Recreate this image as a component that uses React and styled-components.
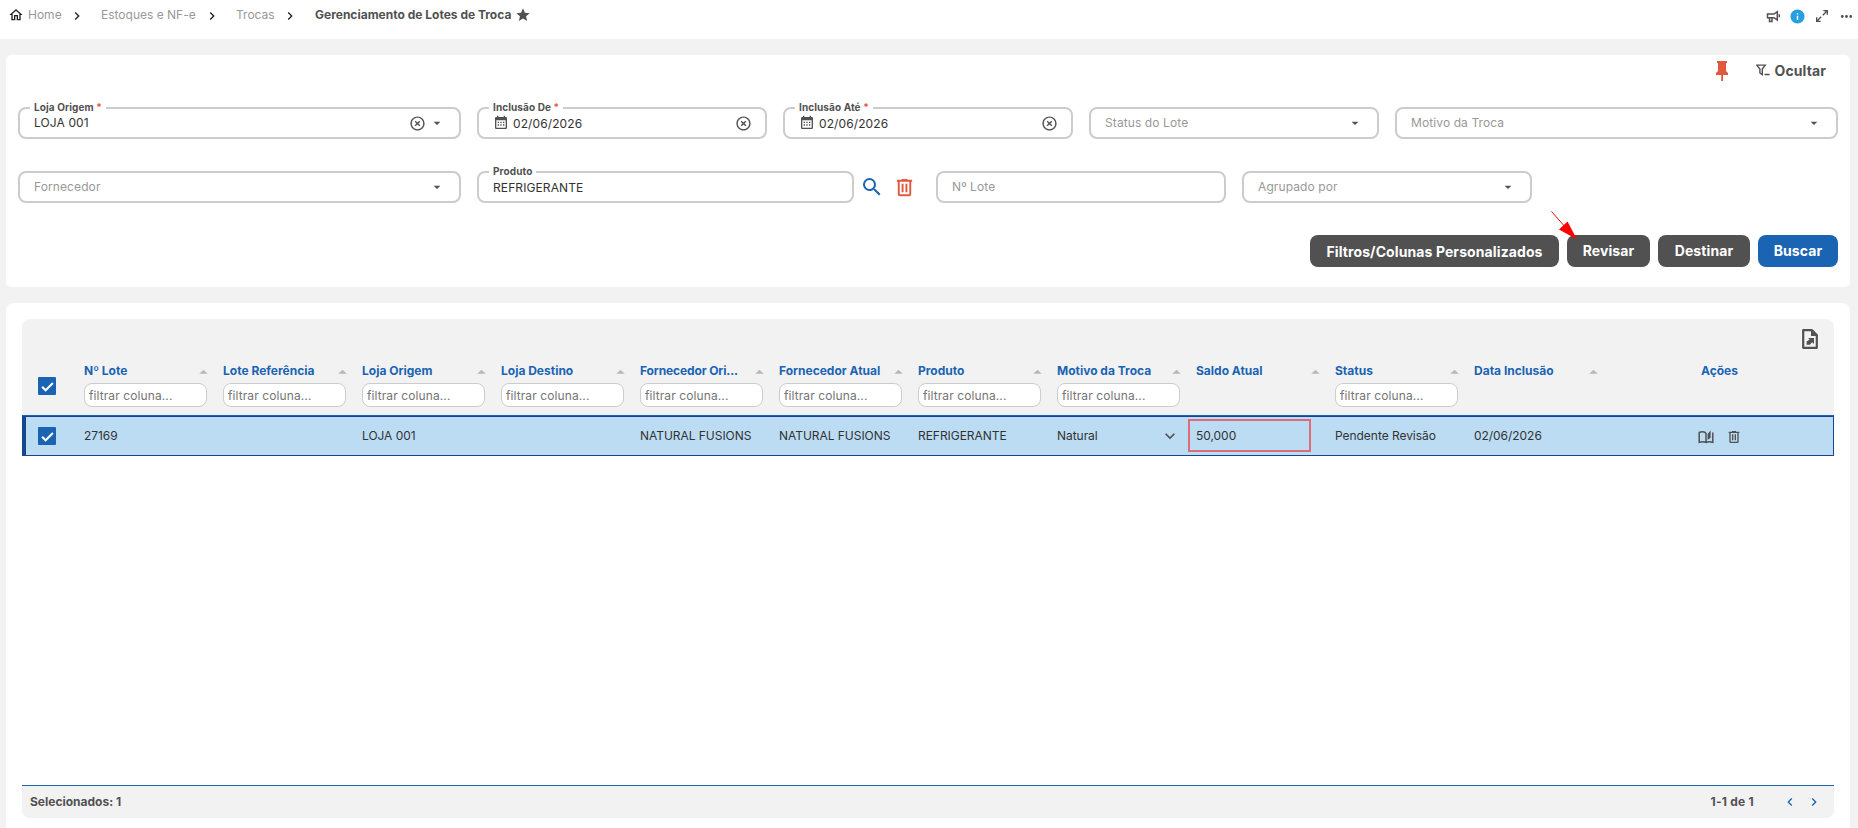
import React from "react";
import styled, { createGlobalStyle } from "styled-components";

const GlobalStyle = createGlobalStyle`
  *, *::before, *::after { box-sizing: border-box; }
  html, body { margin: 0; background: #f2f2f2; }
  body { font-family: Inter, "Liberation Sans", sans-serif; font-size: 12px; color: #333; overflow: hidden; }
`;

const GREY = "#515151";
const BLUE = "#1a64b3";
const RED = "#e2583e";

const ICONS = {
  home: "M12 5.69L17 10.19V18H15V12H9V18H7V10.19L12 5.69M12 3L2 12H5V20H11V14H13V20H19V12H22L12 3Z",
  right: "M8.59,16.58L13.17,12L8.59,7.41L10,6L16,12L10,18L8.59,16.58Z",
  left: "M15.41,16.58L10.83,12L15.41,7.41L14,6L8,12L14,18L15.41,16.58Z",
  down: "M7.41,8.58L12,13.17L16.59,8.58L18,10L12,16L6,10L7.41,8.58Z",
  caret: "M7,10L12,15L17,10H7Z",
  sort: "M6,15L12,9.5L18,15H6Z",
  star: "M12,17.27L18.18,21L16.54,13.97L22,9.24L14.81,8.62L12,2L9.19,8.62L2,9.24L7.45,13.97L5.82,21L12,17.27Z",
  calendar:
    "M9,10V12H7V10H9M13,10V12H11V10H13M17,10V12H15V10H17M19,3A2,2 0 0,1 21,5V19A2,2 0 0,1 19,21H5C3.89,21 3,20.1 3,19V5A2,2 0 0,1 5,3H6V1H8V3H16V1H18V3H19M19,19V8H5V19H19M9,14V16H7V14H9M13,14V16H11V14H13M17,14V16H15V14H17Z",
  clear:
    "M12,20C7.59,20 4,16.41 4,12C4,7.59 7.59,4 12,4C16.41,4 20,7.59 20,12C20,16.41 16.41,20 12,20M12,2C6.47,2 2,6.47 2,12C2,17.53 6.47,22 12,22C17.53,22 22,17.53 22,12C22,6.47 17.53,2 12,2M14.59,8L12,10.59L9.41,8L8,9.41L10.59,12L8,14.59L9.41,16L12,13.41L14.59,16L16,14.59L13.41,12L16,9.41L14.59,8Z",
  info: "M13,9H11V7H13M13,17H11V11H13M12,2A10,10 0 0,0 2,12A10,10 0 0,0 12,22A10,10 0 0,0 22,12A10,10 0 0,0 12,2Z",
  expand:
    "M14,3V5H17.59L12.5,10.09L13.91,11.5L19,6.41V10H21V3M10.09,12.5L5,17.59V14H3V21H10V19H6.41L11.5,13.91Z",
  dots: "M16,12A2,2 0 0,1 18,10A2,2 0 0,1 20,12A2,2 0 0,1 18,14A2,2 0 0,1 16,12M10,12A2,2 0 0,1 12,10A2,2 0 0,1 14,12A2,2 0 0,1 12,14A2,2 0 0,1 10,12M4,12A2,2 0 0,1 6,10A2,2 0 0,1 8,12A2,2 0 0,1 6,14A2,2 0 0,1 4,12Z",
  search:
    "M9.5,3A6.5,6.5 0 0,1 16,9.5C16,11.11 15.41,12.59 14.44,13.73L14.71,14H15.5L20.5,19L19,20.5L14,15.5V14.71L13.73,14.44C12.59,15.41 11.11,16 9.5,16A6.5,6.5 0 0,1 3,9.5A6.5,6.5 0 0,1 9.5,3M9.5,5C7,5 5,7 5,9.5C5,12 7,14 9.5,14C12,14 14,12 14,9.5C14,7 12,5 9.5,5Z",
  trash:
    "M9,3V4H4V6H5V19A2,2 0 0,0 7,21H17A2,2 0 0,0 19,19V6H20V4H15V3H9M7,6H17V19H7V6M9,8V17H11V8H9M13,8V17H15V8H13Z",
  check: "M9 20.4L2.2 13.6L4.6 11.2L9 15.6L19.4 5.2L21.8 7.6Z",
};

const Svg = styled.svg`
  display: block;
  flex: none;
  width: ${(p) => p.$size}px;
  height: ${(p) => p.$size}px;
  fill: ${(p) => p.$color || GREY};
`;

const Icon = ({ name, size = 16, color, className }) => (
  <Svg viewBox="0 0 24 24" $size={size} $color={color} className={className}>
    <path d={ICONS[name]} />
  </Svg>
);

const Page = styled.div`
  display: flex;
  flex-direction: column;
  height: 828px;
  background: #f2f2f2;
`;

const TopBar = styled.header`
  display: flex;
  justify-content: space-between;
  height: 39px;
  padding: 0 3px 9px 8px;
  background: #fff;
`;

const Breadcrumb = styled.nav`
  display: flex;
  align-items: center;
`;

const Crumb = styled.span`
  color: ${(p) => (p.$current ? GREY : "#999")};
  font-weight: ${(p) => (p.$current ? 700 : 400)};
  padding-bottom: 2px;
  white-space: nowrap;
  width: ${(p) => p.$w}px;
  margin-left: ${(p) => p.$gap || 0}px;
`;

const CrumbArrow = styled(Icon)`
  margin: 2px 0 0 7px;
`;

const TopActions = styled.div`
  display: flex;
  align-items: center;
  gap: 8px;
  padding-top: 2px;
`;

const Panel = styled.section`
  margin: 16px 8px 0 6px;
  background: #fff;
  border-radius: 5px;
`;

const FilterPanel = styled(Panel)`
  height: 232px;
  padding: 0 12px;
`;

const PanelTools = styled.div`
  display: flex;
  justify-content: flex-end;
  align-items: center;
  height: 32px;
  padding-right: 12px;
`;

const HideButton = styled.button`
  display: flex;
  align-items: center;
  gap: 5px;
  margin-left: 28px;
  padding: 0 0 2px;
  border: 0;
  background: none;
  color: ${GREY};
  font: 700 14px Inter, sans-serif;
  letter-spacing: 0.1px;
`;

const FieldRow = styled.div`
  display: flex;
  gap: 16px;
  margin-top: ${(p) => p.$top}px;
`;

const FieldBox = styled.div`
  position: relative;
  display: flex;
  align-items: center;
  flex: none;
  width: ${(p) => p.$w}px;
  height: 32px;
  padding: 0 14px;
  border: 2px solid #ccc;
  border-radius: 8px;
  color: ${(p) => (p.$empty ? "#999" : "#333")};
`;

const FieldLabel = styled.label`
  position: absolute;
  top: -9px;
  left: 10px;
  padding: 0 4px;
  background: #fff;
  color: ${GREY};
  font-size: 10px;
  line-height: 15px;
  font-weight: 700;
  letter-spacing: 0.1px;
  white-space: nowrap;
`;

const Required = styled.span`
  color: ${RED};
`;

const FieldText = styled.span`
  flex: 1;
  padding-bottom: ${(p) => (p.$low ? 0 : 2)}px;
  letter-spacing: 0.1px;
  white-space: nowrap;
`;

const FieldCalendar = styled(Icon)`
  margin: -1px 4px 0 0;
`;

const FieldClear = styled(Icon)`
  margin-right: -0.5px;
`;

const SelectCaret = styled(Icon)`
  margin-left: 4px;
`;

const Field = ({ w, label, required, value, placeholder, date, clear, select }) => (
  <FieldBox $w={w} $empty={!value}>
    {label && (
      <FieldLabel>
        {label} {required && <Required>*</Required>}
      </FieldLabel>
    )}
    {date && <FieldCalendar name="calendar" size={16} />}
    <FieldText $low={label && !select}>{value || placeholder}</FieldText>
    {clear && <FieldClear name="clear" size={17} />}
    {select && <SelectCaret name="caret" size={16} />}
  </FieldBox>
);

const ProductGroup = styled.div`
  display: flex;
  align-items: center;
  width: 443px;
`;

const ProductIcon = styled(Icon)`
  margin-left: ${(p) => (p.name === "search" ? 6 : 9)}px;
`;

const ButtonRow = styled.div`
  display: flex;
  justify-content: flex-end;
  gap: 8px;
  margin-top: 32px;
`;

const Button = styled.button`
  width: ${(p) => p.$w}px;
  height: 32px;
  padding: 0 0 ${(p) => (p.$low ? "0" : "2px")};
  border: 0;
  border-radius: 8px;
  background: ${(p) => (p.$primary ? BLUE : GREY)};
  color: #fff;
  font: 700 14px Inter, sans-serif;
  letter-spacing: 0.1px;
  white-space: nowrap;
`;

const Pointer = styled.svg`
  position: absolute;
  left: 1551px;
  top: 211px;
  width: 27px;
  height: 30px;
`;

const ListPanel = styled(Panel)`
  display: flex;
  flex: 1;
  flex-direction: column;
  padding: 16px 16px 10px;
  border-radius: 8px 8px 0 0;
`;

const TableHead = styled.div`
  height: 97px;
  border-radius: 8px 8px 0 0;
  border-bottom: 1px solid ${BLUE};
  background: #f2f2f2;
`;

const HeadTools = styled.div`
  display: flex;
  justify-content: flex-end;
  height: 42px;
  padding: 10px 16px 0 0;
`;

const GridRow = styled.div`
  display: grid;
  grid-template-columns: 62px repeat(11, 139px) 1fr;
`;

const SelectedRow = styled(GridRow)`
  align-items: center;
  height: 40px;
  border: 1px solid #15468e;
  border-left-width: 4px;
  background: #bbdcf3;
  grid-template-columns: 58px repeat(11, 139px) 1fr;
`;

const CheckCell = styled.div`
  padding: ${(p) => (p.$head ? "16px 0 0 16px" : "0 0 0 12px")};
`;

const Checkbox = styled.span`
  display: flex;
  align-items: center;
  justify-content: center;
  width: 18px;
  height: 18px;
  border-radius: 1px;
  background: ${BLUE};
`;

const HeadCell = styled.div`
  width: 124px;
`;

const HeadTitle = styled.div`
  display: flex;
  align-items: center;
  justify-content: space-between;
  height: 20px;
  color: ${BLUE};
  font-weight: 700;
  white-space: nowrap;
`;

const TitleText = styled.span`
  padding-bottom: 2px;
  letter-spacing: ${(p) => p.$track}px;
`;

const SortIcon = styled(Icon)`
  margin-right: -4px;
`;

const FilterInput = styled.input`
  display: block;
  width: 123px;
  height: 24px;
  margin-top: 2px;
  padding: 1px 4px 0;
  border: 1px solid #ccc;
  border-radius: 8px;
  background: #fff;
  font: 400 12px Inter, sans-serif;
  letter-spacing: 0.1px;
  &::placeholder { color: #757575; opacity: 1; }
`;

const ActionsTitle = styled.div`
  padding-left: 88px;
  color: ${BLUE};
  font-weight: 700;
  line-height: 19px;
`;

const Cell = styled.div`
  display: flex;
  align-items: center;
  justify-content: space-between;
  width: 123px;
  padding-bottom: 2px;
  letter-spacing: -0.04px;
  white-space: nowrap;
`;

const BalanceCell = styled(Cell)`
  height: 33px;
  margin: -1px 0 0 -8px;
  padding: 0 0 0 6px;
  border: 2px solid #de6c78;
`;

const RowChevron = styled(Icon)`
  margin: 0 0 -1px;
`;

const RowActions = styled.div`
  display: flex;
  align-items: center;
  gap: 12px;
  padding: 2px 0 0 84.5px;
`;

const EmptyArea = styled.div`
  flex: 1;
`;

const Footer = styled.footer`
  display: flex;
  align-items: center;
  height: 33px;
  padding: 0 12px 1px 8px;
  border-top: 1px solid ${BLUE};
  border-radius: 0 0 8px 8px;
  background: #f2f2f2;
  color: ${GREY};
  font-weight: 700;
`;

const Pager = styled.div`
  display: flex;
  align-items: center;
  gap: 8px;
  margin-left: auto;
`;

const PageRange = styled.span`
  margin-right: 20px;
  letter-spacing: 0.25px;
`;

const COLUMNS = [
  ["Nº Lote", true],
  ["Lote Referência", true],
  ["Loja Origem", true],
  ["Loja Destino", true],
  ["Fornecedor Ori...", true, -0.12],
  ["Fornecedor Atual", true],
  ["Produto", true],
  ["Motivo da Troca", true],
  ["Saldo Atual", false],
  ["Status", true],
  ["Data Inclusão", false],
];

const Check = () => (
  <Checkbox>
    <Icon name="check" size={15} color="#fff" />
  </Checkbox>
);

export default function App() {
  return (
    <Page>
      <GlobalStyle />
      <TopBar>
        <Breadcrumb>
          <Icon name="home" size={16} color="#222" />
          <Crumb $w={34} $gap={4}>Home</Crumb>
          <CrumbArrow name="right" size={16} color="#222" />
          <Crumb $w={96} $gap={16}>Estoques e NF-e</Crumb>
          <CrumbArrow name="right" size={16} color="#222" />
          <Crumb $w={39} $gap={16}>Trocas</Crumb>
          <CrumbArrow name="right" size={16} color="#222" />
          <Crumb $current $w={200} $gap={17}>Gerenciamento de Lotes de Troca</Crumb>
          <Icon name="star" size={16} />
        </Breadcrumb>
        <TopActions>
          <svg width="16" height="16" viewBox="0 0 16 16" fill="none" stroke={GREY} strokeWidth="1.5">
            <path d="M2.5 6H9L12.300 3.700V12L9 9.700H2.500ZM4.500 9.700V13.500H7V9.700M14.300 6.300V9.200" />
          </svg>
          <Icon name="info" size={17} color="#259fe0" />
          <Icon name="expand" size={16} />
          <Icon name="dots" size={17} />
        </TopActions>
      </TopBar>

      <FilterPanel>
        <PanelTools>
          <svg width="12" height="20" viewBox="0 0 12 20" fill={RED}>
            <path d="M1 0H11V2H10V10L12 12V14H7V20H5.2V14H0V12L2 10V2H1Z" />
          </svg>
          <HideButton>
            <svg width="14" height="12" viewBox="0 0 14 12" fill="none" stroke={GREY} strokeWidth="1.4">
              <path d="M.8 1.1H9.2L6.3 5V10.6L3.9 9V5ZM8.5 10.5H13.6" />
            </svg>
            Ocultar
          </HideButton>
        </PanelTools>
        <FieldRow $top={20}>
          <Field w={443} label="Loja Origem" required value="LOJA 001" clear select />
          <Field w={290} label="Inclusão De" required value="02/06/2026" date clear />
          <Field w={290} label="Inclusão Até" required value="02/06/2026" date clear />
          <Field w={290} placeholder="Status do Lote" select />
          <Field w={443} placeholder="Motivo da Troca" select />
        </FieldRow>
        <FieldRow $top={32}>
          <Field w={443} placeholder="Fornecedor" select />
          <ProductGroup>
            <Field w={377} label="Produto" value="REFRIGERANTE" />
            <ProductIcon name="search" size={24} color={BLUE} />
            <ProductIcon name="trash" size={23} color={RED} />
          </ProductGroup>
          <Field w={290} placeholder="Nº Lote" />
          <Field w={290} placeholder="Agrupado por" select />
        </FieldRow>
        <ButtonRow>
          <Button $w={249} $low>Filtros/Colunas Personalizados</Button>
          <Button $w={83}>Revisar</Button>
          <Button $w={92}>Destinar</Button>
          <Button $w={80} $primary>Buscar</Button>
        </ButtonRow>
      </FilterPanel>

      <ListPanel>
        <TableHead>
          <HeadTools>
            <svg width="16" height="20" viewBox="0 0 16 20">
              <path d="M1.2 1.2H10L14.8 6V18.8H1.2Z" fill="none" stroke={GREY} strokeWidth="2.2" strokeLinejoin="round" />
              <path d="M9 1.2V7H14.8ZM6 9H12V15L10.2 13.3L7.8 15.8H4.6V12.6L7.7 10.6Z" fill={GREY} />
            </svg>
          </HeadTools>
          <GridRow>
            <CheckCell $head>
              <Check />
            </CheckCell>
            {COLUMNS.map(([title, filter, track = 0]) => (
              <HeadCell key={title}>
                <HeadTitle>
                  <TitleText $track={track}>{title}</TitleText>
                  <SortIcon name="sort" size={17} color="#b8b8b8" />
                </HeadTitle>
                {filter && <FilterInput placeholder="filtrar coluna..." />}
              </HeadCell>
            ))}
            <ActionsTitle>Ações</ActionsTitle>
          </GridRow>
        </TableHead>
        <SelectedRow>
          <CheckCell>
            <Check />
          </CheckCell>
          <Cell>27169</Cell>
          <Cell />
          <Cell>LOJA 001</Cell>
          <Cell />
          <Cell>NATURAL FUSIONS</Cell>
          <Cell>NATURAL FUSIONS</Cell>
          <Cell>REFRIGERANTE</Cell>
          <Cell>
            Natural
            <RowChevron name="down" size={20} />
          </Cell>
          <BalanceCell>50,000</BalanceCell>
          <Cell>Pendente Revisão</Cell>
          <Cell>02/06/2026</Cell>
          <RowActions>
            <svg width="16" height="14" viewBox="0 0 16 14" fill="none" stroke={GREY} strokeWidth="1.5">
              <path d="M8 3V12.300Q4.500 11 1.200 12.300V2.500Q4.500 1 8 3M8 12.300Q11.500 11 14.800 12.300V2.500" />
              <path d="M9.600 4L12.600 .5V7.800L9.600 10Z" fill={GREY} stroke="none" />
            </svg>
            <Icon name="trash" size={16} />
          </RowActions>
        </SelectedRow>
        <EmptyArea />
        <Footer>
          Selecionados: 1
          <Pager>
            <PageRange>1-1 de 1</PageRange>
            <Icon name="left" size={16} color={BLUE} />
            <Icon name="right" size={16} color={BLUE} />
          </Pager>
        </Footer>
      </ListPanel>

      <Pointer viewBox="0 0 27 30">
        <path d="M.5 .5L16 18" stroke="#f00" strokeWidth="1" />
        <path d="M26 28.5L8 18.5L16.5 10.5Z" fill="#f00" />
      </Pointer>
    </Page>
  );
}
